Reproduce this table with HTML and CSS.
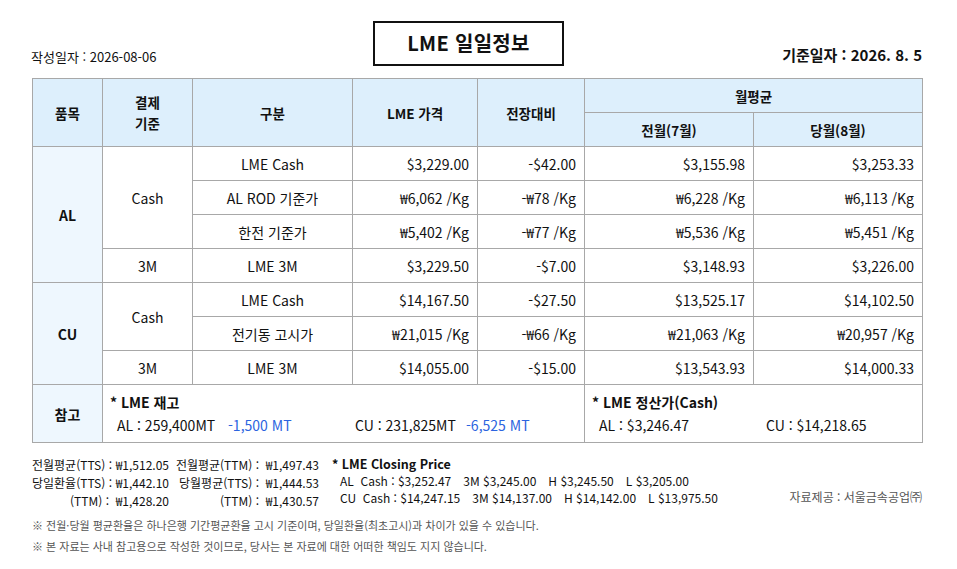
FILE: index.html
```html
<!DOCTYPE html>
<html lang="ko">
<head>
<meta charset="utf-8">
<title>LME 일일정보</title>
<link rel="stylesheet" href="styles.css">
</head>
<body>
<div class="page">
  <header class="top">
    <div class="made">작성일자 : 2026-08-06</div>
    <h1 class="title">LME 일일정보</h1>
    <div class="base">기준일자 : 2026. 8. 5</div>
  </header>

  <table class="lme">
    <colgroup>
      <col class="c1"><col class="c2"><col class="c3"><col class="c4"><col class="c5"><col class="c6"><col class="c7">
    </colgroup>
    <thead>
      <tr>
        <th rowspan="2">품목</th>
        <th rowspan="2" class="two">결제<br>기준</th>
        <th rowspan="2">구분</th>
        <th rowspan="2">LME 가격</th>
        <th rowspan="2">전장대비</th>
        <th colspan="2">월평균</th>
      </tr>
      <tr>
        <th>전월(7월)</th>
        <th>당월(8월)</th>
      </tr>
    </thead>
    <tbody>
      <tr>
        <td rowspan="4" class="item">AL</td>
        <td rowspan="3" class="ctr">Cash</td>
        <td class="ctr">LME Cash</td>
        <td class="num">$3,229.00</td>
        <td class="num">-$42.00</td>
        <td class="num">$3,155.98</td>
        <td class="num">$3,253.33</td>
      </tr>
      <tr>
        <td class="ctr">AL ROD 기준가</td>
        <td class="num">₩6,062 /Kg</td>
        <td class="num">-₩78 /Kg</td>
        <td class="num">₩6,228 /Kg</td>
        <td class="num">₩6,113 /Kg</td>
      </tr>
      <tr>
        <td class="ctr">한전 기준가</td>
        <td class="num">₩5,402 /Kg</td>
        <td class="num">-₩77 /Kg</td>
        <td class="num">₩5,536 /Kg</td>
        <td class="num">₩5,451 /Kg</td>
      </tr>
      <tr>
        <td class="ctr">3M</td>
        <td class="ctr">LME 3M</td>
        <td class="num">$3,229.50</td>
        <td class="num">-$7.00</td>
        <td class="num">$3,148.93</td>
        <td class="num">$3,226.00</td>
      </tr>
      <tr>
        <td rowspan="3" class="item">CU</td>
        <td rowspan="2" class="ctr">Cash</td>
        <td class="ctr">LME Cash</td>
        <td class="num">$14,167.50</td>
        <td class="num">-$27.50</td>
        <td class="num">$13,525.17</td>
        <td class="num">$14,102.50</td>
      </tr>
      <tr>
        <td class="ctr">전기동 고시가</td>
        <td class="num">₩21,015 /Kg</td>
        <td class="num">-₩66 /Kg</td>
        <td class="num">₩21,063 /Kg</td>
        <td class="num">₩20,957 /Kg</td>
      </tr>
      <tr>
        <td class="ctr">3M</td>
        <td class="ctr">LME 3M</td>
        <td class="num">$14,055.00</td>
        <td class="num">-$15.00</td>
        <td class="num">$13,543.93</td>
        <td class="num">$14,000.33</td>
      </tr>
      <tr class="ref">
        <td class="item">참고</td>
        <td colspan="4" class="refcell">
          <div class="ref-title">* LME 재고</div>
          <div class="ref-line"><span class="stock">AL : 259,400MT</span><span class="chg chg1">-1,500 MT</span><span class="stock">CU : 231,825MT</span><span class="chg">-6,525 MT</span></div>
        </td>
        <td colspan="2" class="refcell">
          <div class="ref-title">* LME 정산가(Cash)</div>
          <div class="ref-line"><span class="settle">AL : $3,246.47</span><span>CU : $14,218.65</span></div>
        </td>
      </tr>
    </tbody>
  </table>

  <section class="foot">
    <div class="rates">
      <span class="lbl">전월평균(TTS) :</span><span class="val">₩1,512.05</span>
      <span class="lbl">전월평균(TTM) :</span><span class="val">₩1,497.43</span>
      <span class="lbl">당일환율(TTS) :</span><span class="val">₩1,442.10</span>
      <span class="lbl">당월평균(TTS) :</span><span class="val">₩1,444.53</span>
      <span class="lbl">(TTM) :</span><span class="val">₩1,428.20</span>
      <span class="lbl">(TTM) :</span><span class="val">₩1,430.57</span>
    </div>
    <div class="closing">
      <div class="cl-title">* LME Closing Price</div>
      <div class="cl-line"><span>AL&nbsp;&nbsp;Cash : $3,252.47</span><span>3M $3,245.00</span><span>H $3,245.50</span><span>L $3,205.00</span></div>
      <div class="cl-line"><span>CU&nbsp;&nbsp;Cash : $14,247.15</span><span>3M $14,137.00</span><span>H $14,142.00</span><span>L $13,975.50</span></div>
    </div>
    <div class="source">자료제공 : 서울금속공업㈜</div>
  </section>

  <p class="note">※ 전월·당월 평균환율은 하나은행 기간평균환율 고시 기준이며, 당일환율(최초고시)과 차이가 있을 수 있습니다.</p>
  <p class="note">※ 본 자료는 사내 참고용으로 작성한 것이므로, 당사는 본 자료에 대한 어떠한 책임도 지지 않습니다.</p>
</div>
</body>
</html>
```

FILE: styles.css
```css
* { box-sizing: border-box; }
html, body { margin: 0; padding: 0; background: #fff; }
body {
  font-family: "Noto Sans CJK KR", "Noto Sans", sans-serif;
  color: #111;
}
.page {
  width: 957px;
  padding: 21px 35px 0 32px;
}
.top {
  display: grid;
  grid-template-columns: 341px 191px 1fr;
  align-items: end;
  height: 45px;
}
.made {
  font-size: 13px;
  line-height: 18px;
  margin-left: -1px;
  white-space: nowrap;
}
.title {
  margin: 0;
  height: 45px;
  border: 2px solid #111;
  font-size: 20px;
  font-weight: 700;
  line-height: 40px;
  text-align: center;
  letter-spacing: 0.3px;
}
.base {
  text-align: right;
  font-size: 15px;
  font-weight: 700;
  line-height: 20px;
  position: relative;
  top: -1px;
  white-space: nowrap;
}
.lme {
  margin-top: 12px;
  width: 890px;
  border-collapse: collapse;
  table-layout: fixed;
  font-size: 14px;
  white-space: nowrap;
}
.c1 { width: 70px; }
.c2 { width: 90px; }
.c3 { width: 160px; }
.c4 { width: 125px; }
.c5 { width: 107px; }
.c6 { width: 169px; }
.c7 { width: 169px; }
.lme th, .lme td {
  border: 1px solid #a8a8a8;
  height: 34px;
  padding: 0 8px;
  line-height: 18px;
}
.lme th {
  background: #ddeffc;
  font-size: 13.5px;
  font-weight: 700;
  text-align: center;
}
.lme th.two { line-height: 21px; }
.lme td.item {
  background: #eef7fe;
  font-weight: 700;
  text-align: center;
}
.lme td.ctr { text-align: center; }
.lme td.num { text-align: right; }
.lme tr.ref td { height: 58px; }
.lme td.refcell {
  padding: 6px 8px 0 7px;
  vertical-align: top;
  line-height: 23px;
}
.ref-title { font-weight: 700; }
.ref-line { padding-left: 7px; }
.stock { display: inline-block; width: 111px; }
.chg { color: #2c64e0; }
.chg1 { display: inline-block; width: 127px; }
.settle { display: inline-block; width: 167px; }

.foot {
  display: flex;
  align-items: flex-start;
  margin-top: 12px;
  font-size: 12px;
  line-height: 18px;
  white-space: nowrap;
}
.rates {
  display: grid;
  grid-template-columns: 80px 57px 93px 57px;
  padding-top: 1px;
}
.rates .lbl { text-align: right; padding-right: 3px; }
.rates .val { text-align: right; }
.closing { margin-left: 13px; line-height: 17px; }
.cl-title { font-weight: 700; font-size: 12.5px; }
.cl-line { display: flex; gap: 12px; padding-left: 8px; }
.source {
  margin-left: auto;
  margin-top: 33px;
  color: #555;
  font-size: 12px;
}
.note {
  margin: 0;
  color: #555;
  font-size: 11px;
  line-height: 21px;
  white-space: nowrap;
}
.foot + .note { margin-top: 5px; }
```
